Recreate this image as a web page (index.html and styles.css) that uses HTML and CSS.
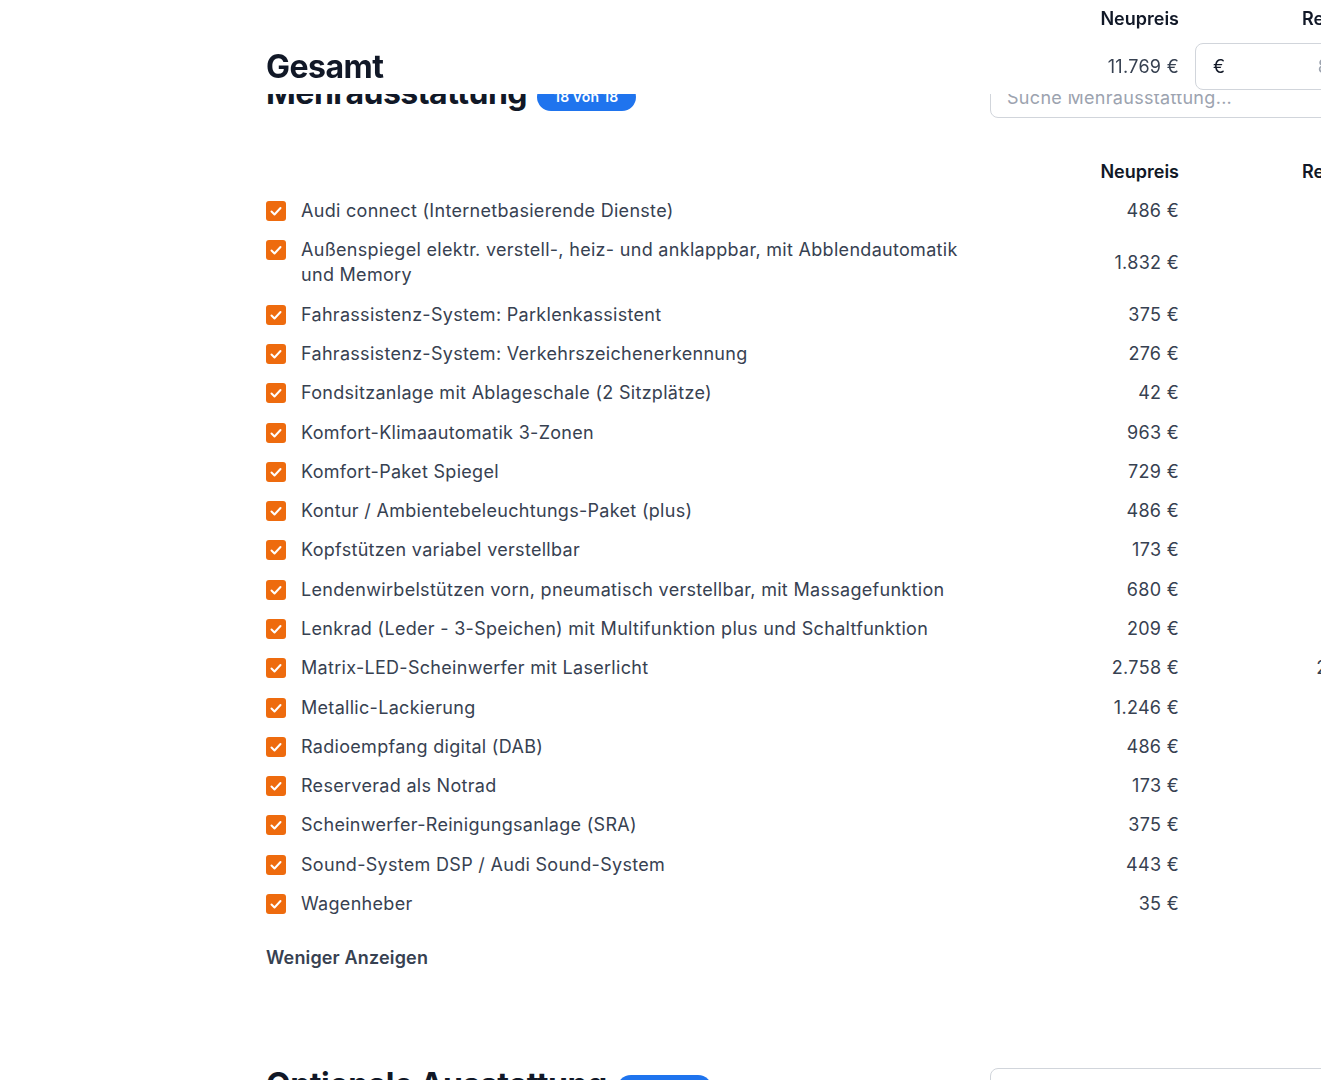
FILE: index.html
```html
<!DOCTYPE html>
<html lang="de">
<head>
<meta charset="utf-8">
<title>Ausstattung</title>
<link rel="stylesheet" href="styles.css">
</head>
<body>
<header class="sticky-head">
  <div class="cols col-labels">
    <div></div>
    <div class="col-label">Neupreis</div>
    <div class="col-label">Restwert</div>
  </div>
  <div class="cols total-row">
    <h1 class="total-title">Gesamt</h1>
    <div class="price">11.769 €</div>
    <label class="money-input"><span class="money-sign">€</span><input type="text" placeholder="8.827"></label>
  </div>
</header>

<main class="page">
  <section class="block">
    <div class="block-head">
      <h2 class="block-title">Mehrausstattung<span class="badge">18 von 18</span></h2>
      <input class="search" type="text" placeholder="Suche Mehrausstattung...">
    </div>
    <div class="cols col-labels table-head">
      <div></div>
      <div class="col-label">Neupreis</div>
      <div class="col-label">Restwert</div>
    </div>
    <ul class="rows">
      <li class="cols row"><div class="item"><span class="check"><svg viewBox="0 0 20 20"><path d="M5.5 10.5l3 3 6-6.5"/></svg></span><span class="name">Audi connect (Internetbasierende Dienste)</span></div><div class="price">486 €</div><div class="price">292 €</div></li>
      <li class="cols row"><div class="item"><span class="check"><svg viewBox="0 0 20 20"><path d="M5.5 10.5l3 3 6-6.5"/></svg></span><span class="name">Außenspiegel elektr. verstell-, heiz- und anklappbar, mit Abblendautomatik und Memory</span></div><div class="price">1.832 €</div><div class="price">916 €</div></li>
      <li class="cols row"><div class="item"><span class="check"><svg viewBox="0 0 20 20"><path d="M5.5 10.5l3 3 6-6.5"/></svg></span><span class="name">Fahrassistenz-System: Parklenkassistent</span></div><div class="price">375 €</div><div class="price">225 €</div></li>
      <li class="cols row"><div class="item"><span class="check"><svg viewBox="0 0 20 20"><path d="M5.5 10.5l3 3 6-6.5"/></svg></span><span class="name">Fahrassistenz-System: Verkehrszeichenerkennung</span></div><div class="price">276 €</div><div class="price">166 €</div></li>
      <li class="cols row"><div class="item"><span class="check"><svg viewBox="0 0 20 20"><path d="M5.5 10.5l3 3 6-6.5"/></svg></span><span class="name">Fondsitzanlage mit Ablageschale (2 Sitzplätze)</span></div><div class="price">42 €</div><div class="price">25 €</div></li>
      <li class="cols row"><div class="item"><span class="check"><svg viewBox="0 0 20 20"><path d="M5.5 10.5l3 3 6-6.5"/></svg></span><span class="name">Komfort-Klimaautomatik 3-Zonen</span></div><div class="price">963 €</div><div class="price">578 €</div></li>
      <li class="cols row"><div class="item"><span class="check"><svg viewBox="0 0 20 20"><path d="M5.5 10.5l3 3 6-6.5"/></svg></span><span class="name">Komfort-Paket Spiegel</span></div><div class="price">729 €</div><div class="price">437 €</div></li>
      <li class="cols row"><div class="item"><span class="check"><svg viewBox="0 0 20 20"><path d="M5.5 10.5l3 3 6-6.5"/></svg></span><span class="name">Kontur / Ambientebeleuchtungs-Paket (plus)</span></div><div class="price">486 €</div><div class="price">292 €</div></li>
      <li class="cols row"><div class="item"><span class="check"><svg viewBox="0 0 20 20"><path d="M5.5 10.5l3 3 6-6.5"/></svg></span><span class="name">Kopfstützen variabel verstellbar</span></div><div class="price">173 €</div><div class="price">104 €</div></li>
      <li class="cols row"><div class="item"><span class="check"><svg viewBox="0 0 20 20"><path d="M5.5 10.5l3 3 6-6.5"/></svg></span><span class="name">Lendenwirbelstützen vorn, pneumatisch verstellbar, mit Massagefunktion</span></div><div class="price">680 €</div><div class="price">408 €</div></li>
      <li class="cols row"><div class="item"><span class="check"><svg viewBox="0 0 20 20"><path d="M5.5 10.5l3 3 6-6.5"/></svg></span><span class="name">Lenkrad (Leder - 3-Speichen) mit Multifunktion plus und Schaltfunktion</span></div><div class="price">209 €</div><div class="price">125 €</div></li>
      <li class="cols row"><div class="item"><span class="check"><svg viewBox="0 0 20 20"><path d="M5.5 10.5l3 3 6-6.5"/></svg></span><span class="name">Matrix-LED-Scheinwerfer mit Laserlicht</span></div><div class="price">2.758 €</div><div class="price">2.017 €</div></li>
      <li class="cols row"><div class="item"><span class="check"><svg viewBox="0 0 20 20"><path d="M5.5 10.5l3 3 6-6.5"/></svg></span><span class="name">Metallic-Lackierung</span></div><div class="price">1.246 €</div><div class="price">748 €</div></li>
      <li class="cols row"><div class="item"><span class="check"><svg viewBox="0 0 20 20"><path d="M5.5 10.5l3 3 6-6.5"/></svg></span><span class="name">Radioempfang digital (DAB)</span></div><div class="price">486 €</div><div class="price">292 €</div></li>
      <li class="cols row"><div class="item"><span class="check"><svg viewBox="0 0 20 20"><path d="M5.5 10.5l3 3 6-6.5"/></svg></span><span class="name">Reserverad als Notrad</span></div><div class="price">173 €</div><div class="price">104 €</div></li>
      <li class="cols row"><div class="item"><span class="check"><svg viewBox="0 0 20 20"><path d="M5.5 10.5l3 3 6-6.5"/></svg></span><span class="name">Scheinwerfer-Reinigungsanlage (SRA)</span></div><div class="price">375 €</div><div class="price">225 €</div></li>
      <li class="cols row"><div class="item"><span class="check"><svg viewBox="0 0 20 20"><path d="M5.5 10.5l3 3 6-6.5"/></svg></span><span class="name">Sound-System DSP / Audi Sound-System</span></div><div class="price">443 €</div><div class="price">266 €</div></li>
      <li class="cols row"><div class="item"><span class="check"><svg viewBox="0 0 20 20"><path d="M5.5 10.5l3 3 6-6.5"/></svg></span><span class="name">Wagenheber</span></div><div class="price">35 €</div><div class="price">21 €</div></li>
    </ul>
    <button class="toggle" type="button">Weniger Anzeigen</button>
  </section>

  <section class="block">
    <div class="block-head">
      <h2 class="block-title">Optionale Ausstattung<span class="badge">0 von 24</span></h2>
      <input class="search" type="text" placeholder="Suche Optionale Ausstattung...">
    </div>
  </section>
</main>
</body>
</html>
```

FILE: styles.css
```css
html, body {
  margin: 0;
  padding: 0;
  overflow: hidden;
  background: #ffffff;
}

body {
  font-family: Inter, "Noto Sans", "Liberation Sans", sans-serif;
  color: #374151;
  font-size: 18px;
  letter-spacing: 0.3px;
}

.cols {
  display: grid;
  grid-template-columns: 1fr 140px 185px;
  column-gap: 16px;
  width: 1114px;
}

/* sticky header overlay */
.sticky-head {
  position: fixed;
  top: 0;
  left: 0;
  right: 0;
  z-index: 10;
  background: #ffffff;
  padding: 5px 0 3px 266px;
  height: 86px;
}

.col-labels {
  height: 28px;
  line-height: 28px;
}

.col-label {
  text-align: right;
  font-size: 18px;
  font-weight: 600;
  letter-spacing: 0;
  color: #111827;
  white-space: nowrap;
}

.total-row {
  margin-top: 10px;
  align-items: center;
  height: 47px;
}

.total-title {
  margin: 0;
  font-size: 32px;
  line-height: 40px;
  font-weight: 700;
  letter-spacing: -0.5px;
  color: #111827;
}

.price {
  text-align: right;
  white-space: nowrap;
  color: #374151;
}

.money-input {
  display: flex;
  align-items: center;
  height: 47px;
  box-sizing: border-box;
  border: 1px solid #d1d5db;
  border-radius: 8px;
  padding: 0 12px 0 17px;
}

.money-sign {
  font-size: 18px;
  color: #111827;
}

.money-input input {
  flex: 1;
  min-width: 0;
  border: 0;
  outline: 0;
  font: inherit;
  letter-spacing: 0.3px;
  text-align: right;
  padding: 0;
  background: transparent;
}

.money-input input::placeholder {
  color: #9ca3af;
}

/* page */
.page {
  padding: 73px 0 0 266px;
}

.block {
  width: 1114px;
}

.block + .block {
  margin-top: 95px;
}

.block-head {
  display: flex;
  justify-content: space-between;
  align-items: flex-start;
}

.block-title {
  margin: 0;
  font-size: 32px;
  line-height: 40px;
  font-weight: 700;
  letter-spacing: -0.5px;
  color: #111827;
  white-space: nowrap;
}

.badge {
  display: inline-block;
  vertical-align: 2px;
  margin-left: 10px;
  padding: 4px 17px;
  border-radius: 999px;
  background: #1f74ee;
  color: #ffffff;
  font-size: 14px;
  line-height: 20px;
  font-weight: 600;
  letter-spacing: 0.3px;
}

.search {
  margin-top: 3px;
  width: 390px;
  height: 42px;
  box-sizing: border-box;
  border: 1px solid #d1d5db;
  border-radius: 8px;
  padding: 0 16px;
  font: inherit;
  letter-spacing: 0.3px;
  color: #374151;
  outline: 0;
}

.search::placeholder {
  color: #9ca3af;
}

.table-head {
  margin-top: 40px;
}

.rows {
  list-style: none;
  margin: 5px 0 0;
  padding: 0;
}

.row {
  padding: 7.15px 0;
  line-height: 25px;
  align-items: center;
}

.item {
  display: flex;
  align-items: flex-start;
  gap: 15px;
  max-width: 700px;
}

.check {
  flex: none;
  width: 20px;
  height: 20px;
  margin-top: 3px;
  border-radius: 3px;
  background: #ee6b0e;
  display: flex;
}

.check svg {
  width: 20px;
  height: 20px;
  fill: none;
  stroke: #ffffff;
  stroke-width: 2;
  stroke-linecap: round;
  stroke-linejoin: round;
}

.name {
  color: #374151;
}

.toggle {
  display: block;
  margin-top: 23px;
  padding: 0;
  border: 0;
  background: none;
  font: inherit;
  font-weight: 600;
  letter-spacing: 0.15px;
  line-height: 24px;
  color: #374151;
  cursor: pointer;
}
```
